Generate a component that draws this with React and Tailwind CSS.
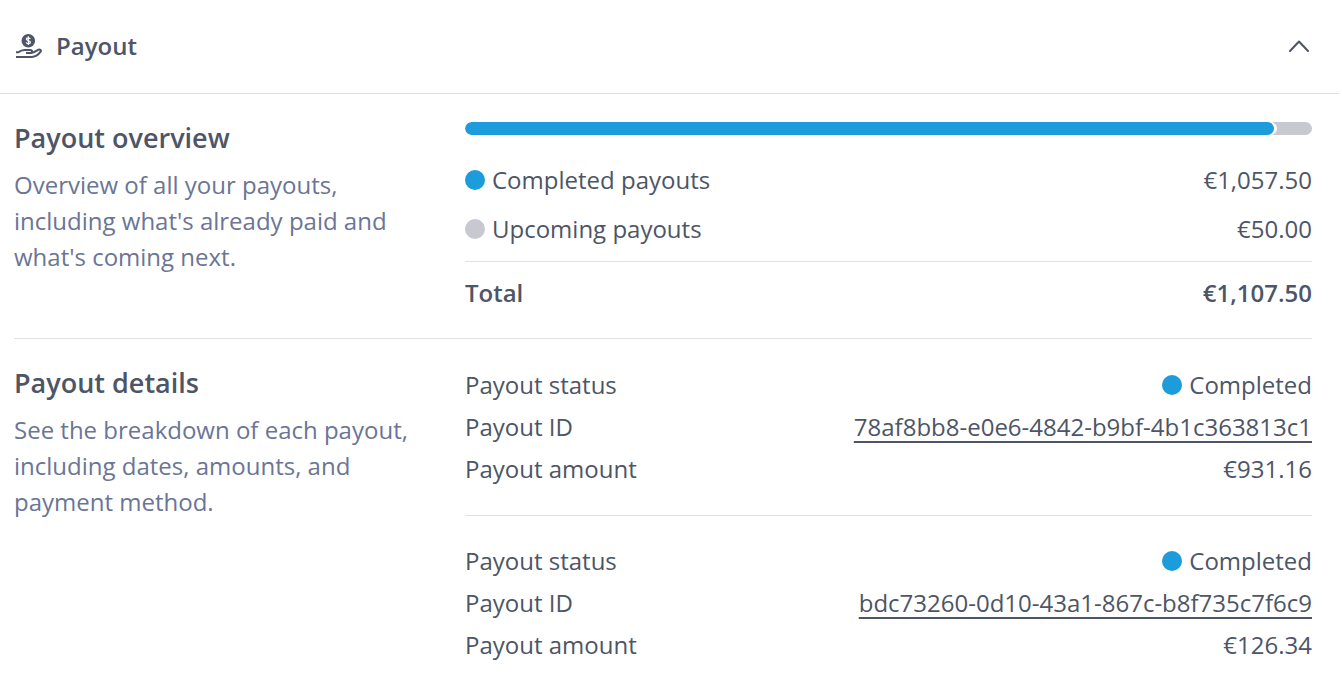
import { useState } from "react";

/* ===============================
   DATA
=============================== */
const COMPLETED = 1057.5;
const UPCOMING = 50;
const TOTAL = COMPLETED + UPCOMING;

const payouts = [
  { id: "78af8bb8-e0e6-4842-b9bf-4b1c363813c1", status: "Completed", amount: 931.16 },
  { id: "bdc73260-0d10-43a1-867c-b8f735c7f6c9", status: "Completed", amount: 126.34 },
];

const fmtMoney = (n) =>
  `€${n.toLocaleString("en-US", { minimumFractionDigits: 2, maximumFractionDigits: 2 })}`;

export default function App() {
  const [open, setOpen] = useState(true);

  return (
    <main className="bg-white pr-[3px] font-['Open_Sans',sans-serif] text-2xl leading-9 text-[#4d5566]">
      {/* ===============================
         HEADER
      =============================== */}
      <h2 className="border-b border-[#dedee1] font-semibold">
        <button
          type="button"
          aria-expanded={open}
          onClick={() => setOpen(!open)}
          className="flex w-full items-center gap-3.5 pt-7 pr-[30px] pb-[29px] pl-3.5 text-left"
        >
          <HandCoinIcon />
          <span className="grow">Payout</span>
          <ChevronIcon open={open} />
        </button>
      </h2>

      {open && (
        <div className="pr-[27px] pl-3.5">
          {/* ===============================
             OVERVIEW
          =============================== */}
          <Section
            title="Payout overview"
            text="Overview of all your payouts, including what's already paid and what's coming next."
          >
            <div className="mb-[27px] h-[13px] overflow-hidden rounded-full bg-[#c8c8d0]">
              <div
                className="box-content h-full rounded-r-full border-r-3 border-white bg-white"
                style={{ width: `${(COMPLETED / TOTAL) * 100}%` }}
              >
                <div className="h-full rounded-full bg-[#1c9cdb]" />
              </div>
            </div>
            <dl>
              <Row label={<Dot color="bg-[#1c9cdb]">Completed payouts</Dot>}>
                {fmtMoney(COMPLETED)}
              </Row>
              <div className="mt-[13px] border-b border-[#e2e2e5] pb-3.5">
                <Row label={<Dot color="bg-[#c8c8d0]">Upcoming payouts</Dot>}>
                  {fmtMoney(UPCOMING)}
                </Row>
              </div>
              <div className="pt-[13px] pb-[27px] font-semibold">
                <Row label="Total">{fmtMoney(TOTAL)}</Row>
              </div>
            </dl>
          </Section>

          <hr className="border-[#e2e2e5]" />

          {/* ===============================
             DETAILS
          =============================== */}
          <Section
            title="Payout details"
            text="See the breakdown of each payout, including dates, amounts, and payment method."
          >
            <div className="divide-y divide-[#e2e2e5]">
              {payouts.map((p) => (
                <dl
                  key={p.id}
                  className="space-y-1.5 pt-[27px] pb-7 first:pt-0 last:pb-0"
                >
                  <Row label="Payout status">
                    <Dot color="bg-[#1c9cdb]">{p.status}</Dot>
                  </Row>
                  <Row label="Payout ID">
                    <a
                      href={`#${p.id}`}
                      className="underline decoration-2 underline-offset-[5px]"
                    >
                      {p.id}
                    </a>
                  </Row>
                  <Row label="Payout amount">{fmtMoney(p.amount)}</Row>
                </dl>
              ))}
            </div>
          </Section>
        </div>
      )}
    </main>
  );
}

/* ===============================
   UI COMPONENTS
=============================== */
function Section({ title, text, children }) {
  return (
    <section className="grid grid-cols-[400px_1fr] gap-[51px] pt-7">
      <div>
        <h3 className="mb-[13px] text-[27px] leading-8 font-semibold">{title}</h3>
        <p className="text-[#6b7596]">{text}</p>
      </div>
      <div>{children}</div>
    </section>
  );
}

function Row({ label, children }) {
  return (
    <div className="flex items-center justify-between">
      <dt>{label}</dt>
      <dd>{children}</dd>
    </div>
  );
}

function Dot({ color, children }) {
  return (
    <span className="flex items-center gap-[7px]">
      <span className={`size-5 rounded-full ${color}`} />
      {children}
    </span>
  );
}

function HandCoinIcon() {
  return (
    <svg
      viewBox="0 0 28 28"
      className="size-7"
      fill="none"
      stroke="currentColor"
      strokeWidth="2"
      strokeLinejoin="round"
      aria-hidden="true"
    >
      <circle cx="14.3" cy="8.7" r="6.8" fill="currentColor" stroke="none" />
      <path
        d="M16.3 7C16 6.1 15.3 5.8 14.3 5.8c-1.2 0-2 .5-2 1.3 0 2.2 4.1 1.1 4.1 3.2 0 .9-.9 1.4-2.1 1.4-1.1 0-1.9-.4-2.2-1.3M14.3 4.3v8.8"
        stroke="white"
        strokeWidth="1.2"
      />
      <path d="M2 20.2h2.4c2.2-1.8 3.8-2.3 6-2.3h5.8c2.5 0 2.5 3.2 0 3.2h-4.2M17.8 20.7c3-.3 4.6-2.3 6.6-3 1.8-.6 3.2.5 2.2 1.9-2.4 3.3-5 5.3-8.800 5.300H2" />
    </svg>
  );
}

function ChevronIcon({ open }) {
  return (
    <svg
      viewBox="0 0 20 20"
      className={`size-5 ${open ? "" : "rotate-180"}`}
      fill="none"
      stroke="currentColor"
      strokeWidth="2"
      strokeLinecap="round"
      strokeLinejoin="round"
      aria-hidden="true"
    >
      <path d="M1 15L10 5.5L19 15" />
    </svg>
  );
}
